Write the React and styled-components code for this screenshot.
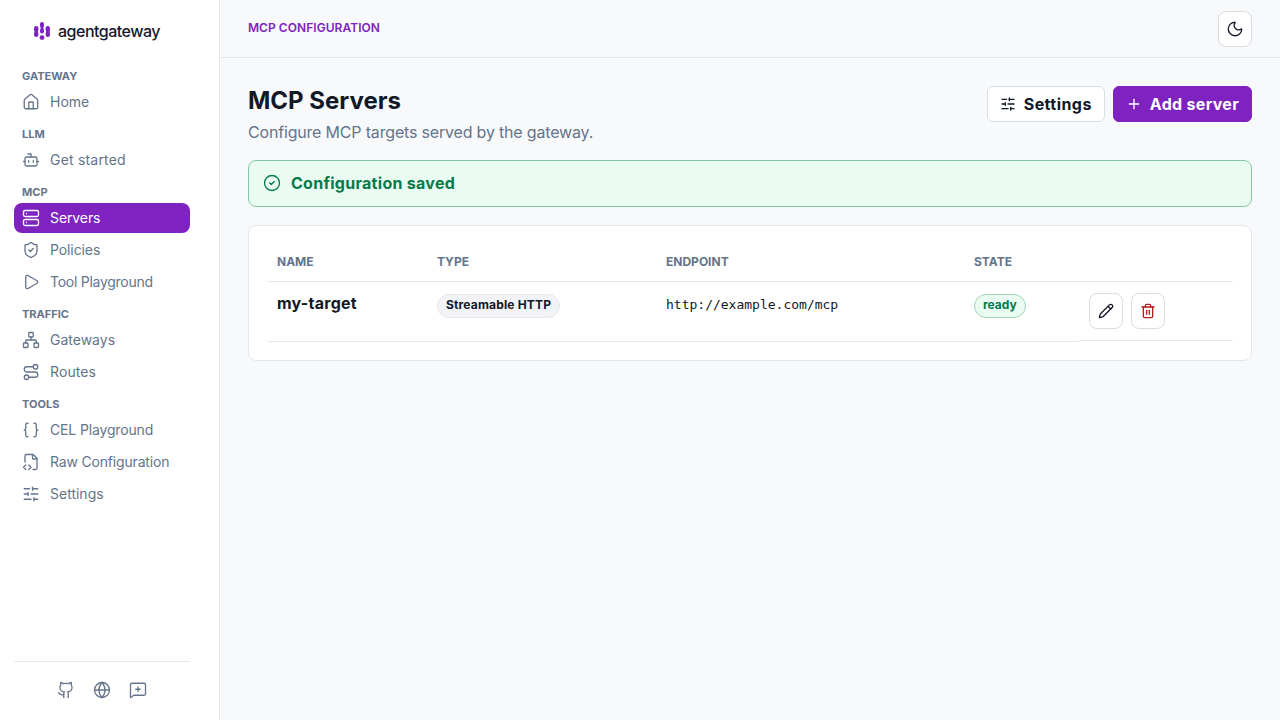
import React from 'react'
import styled, { createGlobalStyle } from 'styled-components'
import {
  House,
  Bot,
  Server,
  ShieldCheck,
  Play,
  Network,
  Route,
  Braces,
  FileCodeCorner,
  SlidersHorizontal,
  Github,
  Globe,
  MessageSquarePlus,
  Moon,
  Plus,
  CircleCheck,
  Pencil,
  Trash2,
} from 'lucide-react'

const GlobalStyle = createGlobalStyle`
  * { box-sizing: border-box; }
  html, body { margin: 0; padding: 0; height: 100%; }
  body {
    font-family: Inter, "Noto Sans", sans-serif;
    background: #f8f9fb;
    color: #111827;
  }
`

const Shell = styled.div`
  display: flex;
  width: 1280px;
  height: 720px;
  overflow: hidden;
`

const Sidebar = styled.aside`
  display: flex;
  flex-direction: column;
  width: 220px;
  flex-shrink: 0;
  padding: 0 29px 0 14px;
  background: #fff;
  border-right: 1px solid #e5e7eb;
`

const SideInner = styled.div`
  display: flex;
  flex-direction: column;
  width: 176px;
  height: 100%;
`

const Brand = styled.div`
  display: flex;
  align-items: center;
  gap: 8px;
  height: 67px;
  padding: 0 0 5px 20px;
`

const BrandName = styled.span`
  margin-bottom: 1px;
  font-size: 16px;
  font-weight: 500;
  letter-spacing: -0.5px;
  color: #16162a;
`

const Nav = styled.nav`
  display: flex;
  flex-direction: column;
  flex: 1;
`

const SectionLabel = styled.div`
  height: 18px;
  line-height: 18px;
  margin: ${(p) => (p.$first ? '0' : '6px')} 0 2px;
  padding-left: 8px;
  font-size: 11px;
  font-weight: 700;
  text-transform: uppercase;
  color: #64748b;
`

const NavItem = styled.a`
  display: flex;
  align-items: center;
  gap: 10px;
  height: 30px;
  margin-bottom: 2px;
  padding: 0 0 1px 8px;
  border-radius: 8px;
  font-size: 14px;
  letter-spacing: ${(p) => p.$track || 0}px;
  color: ${(p) => (p.$active ? '#fff' : '#64748b')};
  background: ${(p) => (p.$active ? '#7e22c0' : 'transparent')};
`

const SideFooter = styled.div`
  display: flex;
  justify-content: center;
  align-items: center;
  gap: 18px;
  height: 59px;
  padding-bottom: 2px;
  border-top: 1px solid #e5e7eb;
  color: #64748b;
`

const Main = styled.main`
  display: flex;
  flex-direction: column;
  flex: 1;
  min-width: 0;
`

const TopBar = styled.header`
  display: flex;
  align-items: center;
  justify-content: space-between;
  height: 58px;
  padding: 0 28px;
  border-bottom: 1px solid #e5e7eb;
`

const Crumb = styled.div`
  margin-bottom: 2px;
  font-size: 12px;
  font-weight: 600;
  letter-spacing: 0.05px;
  text-transform: uppercase;
  color: #7e22c0;
`

const ThemeToggle = styled.button`
  display: flex;
  align-items: center;
  justify-content: center;
  width: 34px;
  height: 36px;
  padding: 0;
  background: #fff;
  border: 1px solid #d9dce3;
  border-radius: 8px;
  color: #16162a;
`

const Content = styled.div`
  display: flex;
  flex-direction: column;
  padding: 28px;
`

const PageHead = styled.div`
  display: flex;
  justify-content: space-between;
  align-items: flex-start;
  height: 74px;
`

const Title = styled.h1`
  margin: 0;
  font-size: 24px;
  line-height: 30px;
  font-weight: 700;
  color: #111827;
`

const Subtitle = styled.p`
  margin: 4px 0 0;
  font-size: 16px;
  line-height: 24px;
  letter-spacing: -0.18px;
  color: #64748b;
`

const Actions = styled.div`
  display: flex;
  gap: 8px;
`

const Button = styled.button`
  display: flex;
  align-items: center;
  gap: 8px;
  height: 36px;
  padding: 0 12px;
  border-radius: 6px;
  border: 1px solid ${(p) => (p.$primary ? '#7e22c0' : '#d9dce3')};
  background: ${(p) => (p.$primary ? '#7e22c0' : '#fff')};
  color: ${(p) => (p.$primary ? '#fff' : '#111827')};
  font-family: inherit;
  font-size: 16px;
  font-weight: 700;
  letter-spacing: ${(p) => (p.$primary ? 0.3 : 0.45)}px;
`

const Alert = styled.div`
  display: flex;
  align-items: center;
  gap: 10px;
  height: 47px;
  margin-bottom: 18px;
  padding: 0 14px 2px;
  background: #eafcf2;
  border: 1px solid #86c7a3;
  border-radius: 8px;
  color: #047a4a;
  font-size: 16px;
  font-weight: 700;
  letter-spacing: 0.28px;
`

const Card = styled.section`
  height: 136px;
  padding: 18px;
  background: #fff;
  border: 1px solid #e5e7eb;
  border-radius: 8px;
`

const Table = styled.table`
  width: 966px;
  table-layout: fixed;
  border-collapse: separate;
  border-spacing: 0;
`

const HeadCell = styled.th`
  height: 38px;
  padding: 0 10px 2px;
  border-bottom: 1px solid #e5e7eb;
  text-align: left;
  font-size: 12px;
  font-weight: 700;
  text-transform: uppercase;
  color: #64748b;
`

const Cell = styled.td`
  height: 60px;
  padding: ${(p) => p.$top}px 10px 0;
  vertical-align: top;
  border-bottom: 1px solid #e5e7eb;
`

const ActionCell = styled.td`
  height: 60px;
  padding: 0;
  vertical-align: top;
`

const ActionBox = styled.div`
  display: flex;
  gap: 8px;
  height: 59px;
  padding: 11px 10px 0;
  border-bottom: 1px solid #e5e7eb;
`

const TargetName = styled.span`
  display: block;
  font-size: 16px;
  line-height: 20px;
  font-weight: 700;
  letter-spacing: 0.25px;
  color: #111827;
`

const Badge = styled.span`
  display: flex;
  align-items: center;
  width: fit-content;
  height: 24px;
  padding: 0 8px 4px;
  border-radius: 12px;
  background: ${(p) => (p.$ok ? '#eafcf2' : '#f1f3f6')};
  border: 1px solid ${(p) => (p.$ok ? '#a3d4b9' : '#e5e7eb')};
  color: ${(p) => (p.$ok ? '#047a4a' : '#111827')};
  font-size: 12px;
  font-weight: 700;
  letter-spacing: ${(p) => (p.$ok ? 0 : 0.17)}px;
`

const Endpoint = styled.code`
  display: block;
  font-family: "DejaVu Sans Mono", monospace;
  font-size: 13px;
  line-height: 22px;
  color: #111827;
`

const IconButton = styled.button`
  display: flex;
  align-items: center;
  justify-content: center;
  width: 34px;
  height: 36px;
  padding: 0;
  background: #fff;
  border: 1px solid #d9dce3;
  border-radius: 8px;
  color: ${(p) => (p.$danger ? '#b91c1c' : '#16162a')};
`

const sections = [
  { label: 'Gateway', items: [{ name: 'Home', icon: House }] },
  { label: 'LLM', items: [{ name: 'Get started', icon: Bot, track: 0.2 }] },
  {
    label: 'MCP',
    items: [
      { name: 'Servers', icon: Server, active: true, track: -0.1 },
      { name: 'Policies', icon: ShieldCheck, track: -0.1 },
      { name: 'Tool Playground', icon: Play, track: -0.27 },
    ],
  },
  {
    label: 'Traffic',
    items: [
      { name: 'Gateways', icon: Network },
      { name: 'Routes', icon: Route, track: 0.1 },
    ],
  },
  {
    label: 'Tools',
    items: [
      { name: 'CEL Playground', icon: Braces, track: -0.15 },
      { name: 'Raw Configuration', icon: FileCodeCorner, track: -0.18 },
      { name: 'Settings', icon: SlidersHorizontal },
    ],
  },
]

function Logo() {
  return (
    <svg width="16" height="18" viewBox="0 0 16 18" fill="#7e22c0">
      <rect x="0" y="4" width="4.4" height="6" rx="2.2" />
      <rect x="0.6" y="8" width="3.2" height="3" />
      <rect x="0" y="9.5" width="4.4" height="5.5" rx="2.2" />
      <rect x="6" y="0" width="4" height="5.5" rx="2" />
      <rect x="6.6" y="4" width="2.8" height="4" />
      <rect x="6" y="6.5" width="4" height="5" rx="2" />
      <circle cx="8" cy="15.6" r="2.4" />
      <rect x="11.6" y="4" width="4.4" height="6" rx="2.2" />
      <rect x="12.2" y="8" width="3.2" height="3" />
      <rect x="11.6" y="9.5" width="4.4" height="5.5" rx="2.2" />
    </svg>
  )
}

export default function App() {
  return (
    <Shell>
      <GlobalStyle />
      <Sidebar>
        <SideInner>
          <Brand>
            <Logo />
            <BrandName>agentgateway</BrandName>
          </Brand>
          <Nav>
            {sections.map((s, i) => (
              <React.Fragment key={s.label}>
                <SectionLabel $first={i === 0}>{s.label}</SectionLabel>
                {s.items.map((item) => (
                  <NavItem key={item.name} $active={item.active} $track={item.track}>
                    <item.icon size={18} strokeWidth={1.75} />
                    {item.name}
                  </NavItem>
                ))}
              </React.Fragment>
            ))}
          </Nav>
          <SideFooter>
            <Github size={18} strokeWidth={1.75} />
            <Globe size={18} strokeWidth={1.75} />
            <MessageSquarePlus size={18} strokeWidth={1.75} />
          </SideFooter>
        </SideInner>
      </Sidebar>
      <Main>
        <TopBar>
          <Crumb>MCP Configuration</Crumb>
          <ThemeToggle>
            <Moon size={18} strokeWidth={1.75} />
          </ThemeToggle>
        </TopBar>
        <Content>
          <PageHead>
            <div>
              <Title>MCP Servers</Title>
              <Subtitle>Configure MCP targets served by the gateway.</Subtitle>
            </div>
            <Actions>
              <Button>
                <SlidersHorizontal size={16} strokeWidth={2} />
                Settings
              </Button>
              <Button $primary>
                <Plus size={16} strokeWidth={2} />
                Add server
              </Button>
            </Actions>
          </PageHead>
          <Alert>
            <CircleCheck size={18} strokeWidth={1.75} />
            Configuration saved
          </Alert>
          <Card>
            <Table>
              <colgroup>
                <col style={{ width: 160 }} />
                <col style={{ width: 229 }} />
                <col style={{ width: 308 }} />
                <col style={{ width: 115 }} />
                <col style={{ width: 154 }} />
              </colgroup>
              <thead>
                <tr>
                  <HeadCell>Name</HeadCell>
                  <HeadCell>Type</HeadCell>
                  <HeadCell>Endpoint</HeadCell>
                  <HeadCell>State</HeadCell>
                  <HeadCell />
                </tr>
              </thead>
              <tbody>
                <tr>
                  <Cell $top={11}>
                    <TargetName>my-target</TargetName>
                  </Cell>
                  <Cell $top={12}>
                    <Badge>Streamable HTTP</Badge>
                  </Cell>
                  <Cell $top={12}>
                    <Endpoint>http://example.com/mcp</Endpoint>
                  </Cell>
                  <Cell $top={12}>
                    <Badge $ok>ready</Badge>
                  </Cell>
                  <ActionCell>
                    <ActionBox>
                      <IconButton>
                        <Pencil size={16} strokeWidth={2} />
                      </IconButton>
                      <IconButton $danger>
                        <Trash2 size={16} strokeWidth={2} />
                      </IconButton>
                    </ActionBox>
                  </ActionCell>
                </tr>
              </tbody>
            </Table>
          </Card>
        </Content>
      </Main>
    </Shell>
  )
}
